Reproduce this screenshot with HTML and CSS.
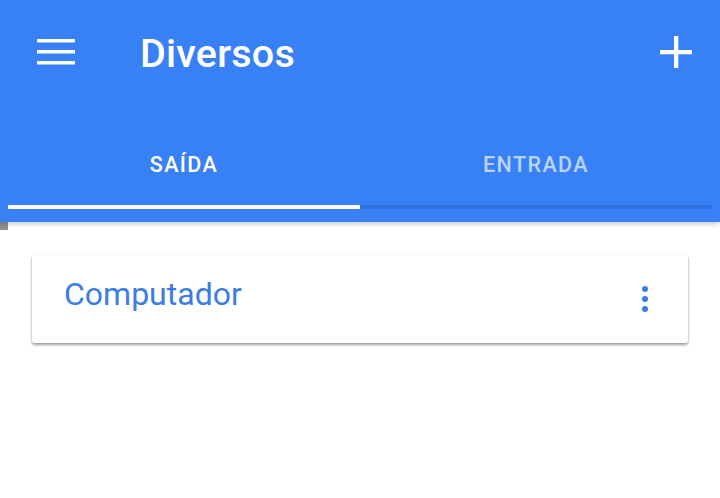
FILE: index.html
```html
<!DOCTYPE html>
<html lang="pt">
<head>
<meta charset="utf-8">
<title>Diversos</title>
<link rel="stylesheet" href="styles.css">
</head>
<body>
<header class="appbar">
  <div class="toolbar">
    <button class="icon-btn menu" aria-label="Menu">
      <svg width="38" height="26" viewBox="0 0 38 26"><rect x="0" y="0" width="38" height="3.5" fill="#fff"/><rect x="0" y="11" width="38" height="3.5" fill="#fff"/><rect x="0" y="22" width="38" height="3.5" fill="#fff"/></svg>
    </button>
    <h1 class="title">Diversos</h1>
    <button class="icon-btn add" aria-label="Adicionar">
      <svg width="32" height="32" viewBox="0 0 32 32"><rect x="14" y="0" width="4.3" height="32" fill="#fff"/><rect x="0" y="14" width="32" height="4.3" fill="#fff"/></svg>
    </button>
  </div>
  <nav class="tabs">
    <div class="tab-row">
      <div class="tab active">SAÍDA</div>
      <div class="tab">ENTRADA</div>
    </div>
    <div class="track"><div class="indicator"></div></div>
  </nav>
</header>
<div class="corner"></div>
<main class="content">
  <div class="card">
    <span class="card-title">Computador</span>
    <button class="more" aria-label="Mais opções">
      <span class="dot"></span><span class="dot"></span><span class="dot"></span>
    </button>
  </div>
</main>
</body>
</html>
```
FILE: styles.css
```css
* { box-sizing: border-box; }
html, body { margin: 0; padding: 0; }
body {
  width: 720px;
  height: 498px;
  background: #fff;
  font-family: Roboto, "Noto Sans", sans-serif;
  overflow: hidden;
}
.appbar {
  position: relative;
  z-index: 2;
  background: #3880f5;
  height: 222px;
  box-shadow: 0 2px 5px rgba(0,0,0,0.22);
}
.toolbar {
  height: 108px;
  display: flex;
  align-items: center;
  padding: 0 28px 0 37px;
}
.icon-btn {
  background: none;
  border: 0;
  padding: 0;
  margin: 0;
  display: flex;
}
.menu { margin-top: -4px; }
.add { margin-left: auto; margin-top: -4px; }
.title {
  margin: 0 0 0 65px;
  color: #fff;
  font-size: 39.5px;
  font-weight: 500;
  line-height: 46px;
  letter-spacing: 0.2px;
}
.tabs { padding: 0 8px; }
.tab-row { display: flex; }
.tab {
  flex: 1;
  text-align: center;
  font-size: 21.5px;
  font-weight: 500;
  line-height: 24px;
  letter-spacing: 1.4px;
  padding: 45px 0 28px;
  color: rgba(255,255,255,0.68);
}
.tab.active { color: #fff; }
.track {
  height: 4px;
  background: #2f71dd;
}
.indicator {
  width: 50%;
  height: 4px;
  background: #fff;
}
.corner {
  width: 8px;
  height: 8px;
  background: #8f8f8f;
}
.content { padding: 25px 32px 0; }
.card {
  height: 88px;
  background: #fff;
  border-radius: 3px;
  box-shadow: 0 2px 3px rgba(0,0,0,0.38), 0 0 2px rgba(0,0,0,0.08);
  display: flex;
  align-items: flex-start;
  padding: 20px 40px 0 32px;
}
.card-title {
  color: #3b7de4;
  font-size: 32px;
  line-height: 38px;
}
.more {
  margin-left: auto;
  margin-top: 11px;
  background: none;
  border: 0;
  padding: 0;
  display: flex;
  flex-direction: column;
  gap: 4px;
}
.dot {
  width: 6px;
  height: 6px;
  border-radius: 50%;
  background: #3b7de4;
}
```
